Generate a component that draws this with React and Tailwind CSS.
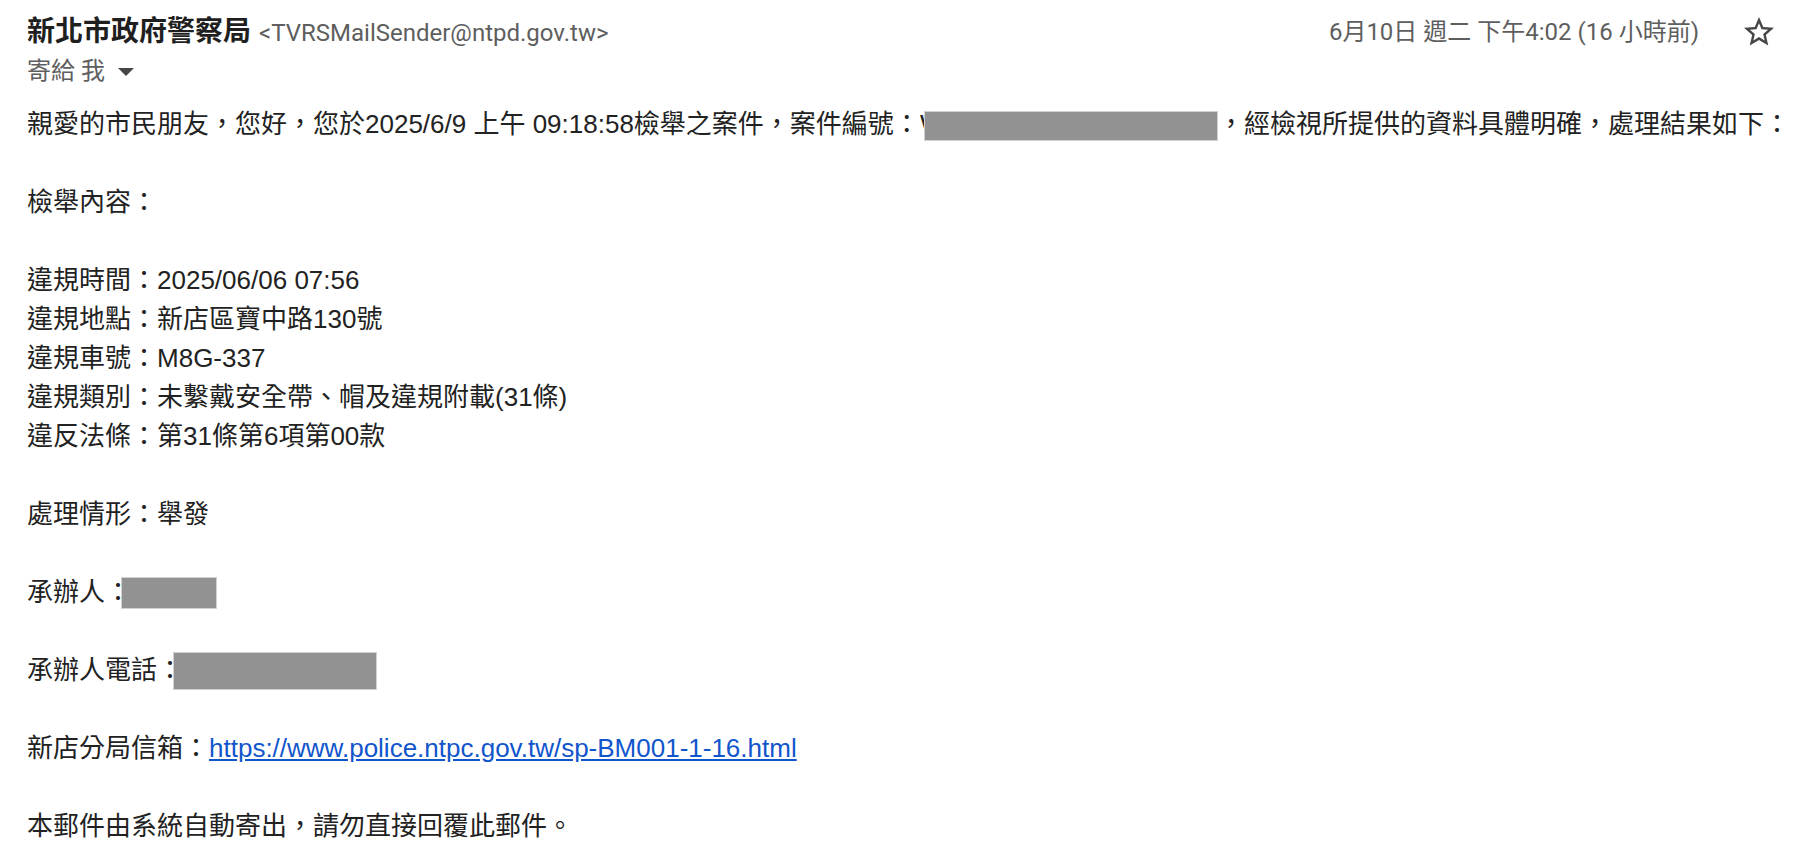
import React from "react";

const bodyFont = { fontFamily: '"Liberation Sans", "Noto Sans CJK TC", sans-serif' };

function Redacted({ className }) {
  return (
    <span
      className={`inline-block align-middle bg-[#929292] border border-[#d2d2d2] ${className}`}
    />
  );
}

function StarOutline() {
  return (
    <svg width="36" height="36" viewBox="0 0 24 24" fill="#444746">
      <path d="M22 9.24l-7.19-.62L12 2 9.19 8.63 2 9.24l5.46 4.73L5.82 21 12 17.27 18.18 21l-1.63-7.03L22 9.24zM12 15.4l-3.76 2.27 1-4.28-3.32-2.88 4.38-.38L12 6.1l1.71 4.04 4.38.38-3.32 2.88 1 4.28L12 15.4z" />
    </svg>
  );
}

const details = [
  ["違規時間", "2025/06/06 07:56"],
  ["違規地點", "新店區寶中路130號"],
  ["違規車號", "M8G-337"],
  ["違規類別", "未繫戴安全帶、帽及違規附載(31條)"],
  ["違反法條", "第31條第6項第00款"],
];

function Blank() {
  return <div className="h-[39px]" />;
}

export default function App() {
  return (
    <div className="min-h-screen bg-white pl-[27px] pr-[25px] pt-[12px]">
      {/* Header */}
      <div
        className="flex items-center justify-between h-[39px]"
        style={{ fontFamily: 'Roboto, "Noto Sans CJK TC", sans-serif' }}
      >
        <div className="flex items-baseline gap-[8px]">
          <span className="text-[28px] font-bold text-[#1f1f1f]">新北市政府警察局</span>
          <span className="text-[24px] text-[#5e5e5e]">&lt;TVRSMailSender@ntpd.gov.tw&gt;</span>
        </div>
        <div className="flex items-center gap-[42px]">
          <span className="text-[24px] text-[#5e5e5e]">6月10日 週二 下午4:02 (16 小時前)</span>
          <StarOutline />
        </div>
      </div>
      <div
        className="flex items-center h-[39px] text-[24px] text-[#5e5e5e]"
        style={{ fontFamily: 'Roboto, "Noto Sans CJK TC", sans-serif' }}
      >
        <span>寄給 我</span>
        <svg width="16" height="8" viewBox="0 0 16 8" className="ml-[13px] mt-[2px]">
          <path d="M0 0h16L8 8z" fill="#444746" />
        </svg>
      </div>

      {/* Body */}
      <div className="mt-[15px] text-[26px] leading-[39px] text-[#222222]" style={bodyFont}>
        <div className="whitespace-nowrap">
          親愛的市民朋友，您好，您於2025/6/9 上午 09:18:58檢舉之案件，案件編號：
          <span className="inline-block w-[6px] h-[39px] overflow-hidden align-bottom">W</span>
          <Redacted className="w-[294px] h-[30px] -ml-[2px]" />
          ，經檢視所提供的資料具體明確，處理結果如下：
        </div>
        <Blank />
        <div>檢舉內容：</div>
        <Blank />
        {details.map(([k, v]) => (
          <div key={k}>
            {k}：{v}
          </div>
        ))}
        <Blank />
        <div>處理情形：舉發</div>
        <Blank />
        <div className="flex items-center h-[39px]">
          承辦人：
          <Redacted className="w-[96px] h-[32px] -ml-[10px]" />
        </div>
        <Blank />
        <div className="flex items-center h-[39px]">
          承辦人電話：
          <Redacted className="w-[204px] h-[38px] -ml-[10px]" />
        </div>
        <Blank />
        <div>
          新店分局信箱：
          <a href="#" className="text-[#1155cc] underline">
            https://www.police.ntpc.gov.tw/sp-BM001-1-16.html
          </a>
        </div>
        <Blank />
        <div>本郵件由系統自動寄出，請勿直接回覆此郵件。</div>
      </div>
    </div>
  );
}
